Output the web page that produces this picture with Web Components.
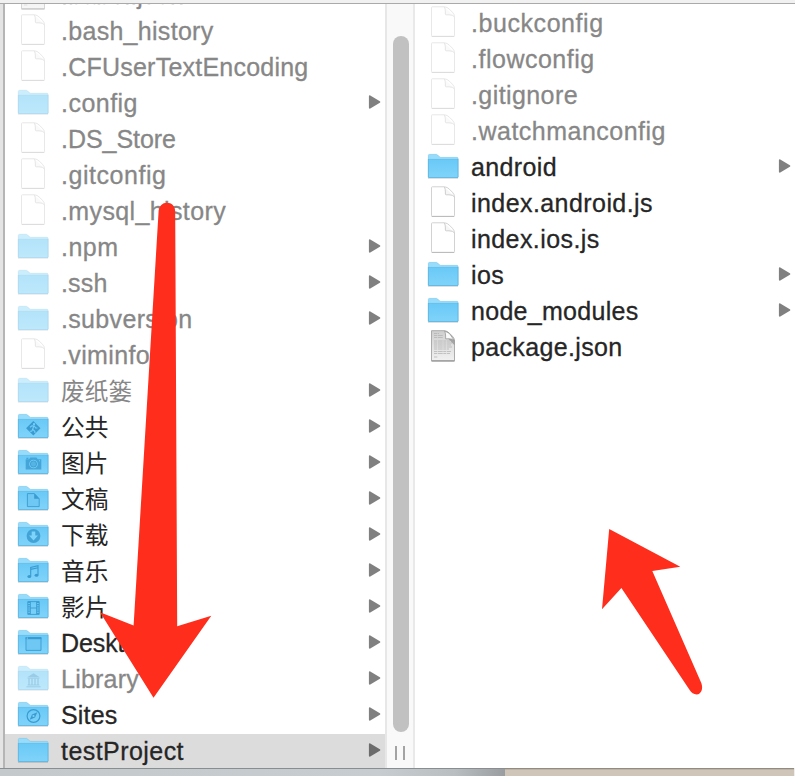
<!DOCTYPE html>
<html lang="zh-CN">
<head>
<meta charset="utf-8">
<title>Finder</title>
<style>
html,body{margin:0;height:100%;overflow:hidden;background:#fff}
body{font-family:"Liberation Sans","Noto Sans CJK SC",sans-serif}
</style>
</head>
<body>
<finder-window></finder-window>
<script>
const FOLDER = `
<defs><linearGradient id="f" x1="0" y1="0" x2="0" y2="1"><stop offset="0" stop-color="#69c9f7"/><stop offset="1" stop-color="#80d3f9"/></linearGradient></defs>
<path d="M1 28.3H31" stroke="#000" stroke-opacity=".14" stroke-width="1.2"/>
<path d="M1.4 27V5.4q0-1 1-1H9.2q.8 0 1.4.6L12.4 6.8q.5.6 1.3.6H30q1 0 1 1V27z" fill="#98dcfb" stroke="#7cc8ec" stroke-width=".7"/>
<path d="M1.4 9.3H31V27q0 .7-.7.7H2q-.7 0-.7-.7z" fill="url(#f)"/>
<path d="M1.4 9.4H31" stroke="#63bae4" stroke-width=".7"/>
<path d="M1.4 9V27.5H31V9" fill="none" stroke="#5cb2de" stroke-width=".8"/>`;
const DOC = `
<path d="M5.3 .8H17.4Q20.3 1 22.4 3.2L25.4 6.2Q27.5 8.3 27.5 11V29.6q0 .7-.7.7H5.2q-.7 0-.7-.7V1.5q0-.7.8-.7z" fill="#fff" stroke="#cdcdcd" stroke-width=".9"/>
<path d="M4.8 30.5H27.2" stroke="#b8b8b8" stroke-width=".9"/>
<path d="M17.4 .9Q18.4 3 18.4 6V8q0 .8.8.8H22Q26 8.8 27.4 10.8" fill="#f6f6f6" stroke="#cacaca" stroke-width=".9" stroke-linejoin="round"/>`;
const TEXTDOC = `
<defs><linearGradient id="t" x1="0" y1="0" x2="0" y2="1"><stop offset="0" stop-color="#cfcfcf"/><stop offset="1" stop-color="#f1f1f1"/></linearGradient></defs>
<path d="M4.5 .7H17.4Q20.3 1 22.4 3.2L25.4 6.2Q27.5 8.3 27.5 11V30.8H4.5z" fill="url(#t)" stroke="#a4a4a4" stroke-width=".9"/>
<path d="M4.5 31H27.5" stroke="#888"/>
<path d="M7 3.5h5M7 5.5h9M7 7.5h9M7 11h16M7 13h18M7 15h17M7 17h18M7 19h15M7 21.5h17M7 23.5h16M7 27h4" stroke="#b0b0b0" stroke-width=".7" stroke-dasharray="3 .7 5 .6"/>
<path d="M18.6 6L27.3 15V10z" fill="#777" opacity=".55"/>
<path d="M17.6 .9Q18.6 3 18.6 6V8.8H22Q26 8.8 27.4 10.6L22.4 3.4z" fill="#fafafa" stroke="#999" stroke-width=".8" stroke-linejoin="round"/>`;
const C = '#3a9bd0';
const GLYPHS = {
  public: `<path d="M16.3 11L23.5 18.2L16.3 25.4L9.1 18.2z" fill="${C}"/><circle cx="17" cy="14.1" r="1.2" fill="#74cdf8"/><path d="M13 17.3L15 15.8L17.4 16L18.6 18L20.4 18M16.6 16.3L15.7 19.3L17.8 21.3L18 23M15.7 19.2L14.7 21.2L12.8 21.3" fill="none" stroke="#74cdf8" stroke-width="1.1"/>`,
  camera: `<path d="M8.7 13.2H12L13.4 11.4H19.4L20.8 13.2H24.3V23.4H8.7z" fill="${C}" opacity=".8"/><path d="M9.4 12.3h2" stroke="${C}"/><circle cx="16.5" cy="18" r="4.3" fill="#74cdf8"/><circle cx="16.5" cy="18" r="3.1" fill="#55b4e3" stroke="${C}" stroke-width=".8"/><path d="M22 14.8h1" stroke="#74cdf8"/>`,
  paper: `<path d="M10.4 11.6H17.4L22.2 16.8V24.6H10.4z" fill="#6fc8f3" stroke="${C}" stroke-width=".9"/><path d="M17.2 11.5V16.8H22.4z" fill="${C}"/>`,
  down: `<circle cx="16.5" cy="18" r="6.9" fill="${C}" opacity=".85"/><path d="M14.7 13.4H18.3V17.5H21L16.5 22.6L12 17.5H14.7z" fill="#7ed3fa"/>`,
  music: `<path d="M13.7 22.2V13.4L21 11.7V21M13.7 15.4L21 13.8" fill="none" stroke="${C}" stroke-width="1.1"/><ellipse cx="12.3" cy="22.6" rx="1.9" ry="1.5" fill="${C}"/><ellipse cx="19.5" cy="21.3" rx="1.9" ry="1.5" fill="${C}"/>`,
  film: `<path d="M10.8 11.6H22.2V24.4H10.8z" fill="none" stroke="${C}" stroke-width=".9"/><path d="M12 11.8V24.4M21 11.8V24.4" stroke="${C}" stroke-width="1.8" stroke-dasharray="1.2 1"/><path d="M13.4 11.6V24.4M19.6 11.6V24.4M13.4 18H19.6" stroke="${C}" stroke-width=".9"/>`,
  desktop: `<path d="M9 11.5H24V24.4H9z" fill="#6fc8f3" stroke="${C}" stroke-width=".9"/><path d="M8.6 12.2H24.4" stroke="${C}" stroke-width="2"/><path d="M9.8 12.1h1" stroke="#9cdcfb"/>`,
  library: `<path d="M10.2 15.3L16.5 11.2L22.8 15.3z" fill="${C}"/><path d="M10.6 16.2H22.4M10.6 23H22.4M9.4 24.8H23.6" stroke="${C}" stroke-width="1"/><path d="M12 16.5V23M15 16.5V23M18 16.5V23M21 16.5V23" stroke="${C}" stroke-width="1.3"/>`,
  compass: `<circle cx="16.5" cy="18" r="6.4" fill="none" stroke="${C}" stroke-width="1.2"/><path d="M20.3 14.2L18 19.5L12.7 21.8L15 16.5z" fill="${C}"/><circle cx="16.5" cy="18" r="1.1" fill="#80d3f9"/>`
};

class FileIcon extends HTMLElement {
  connectedCallback() {
    const kind = this.getAttribute('kind');
    const art = kind === 'doc' ? DOC : kind === 'text' ? TEXTDOC : FOLDER + (GLYPHS[kind] || '');
    this.attachShadow({mode: 'open'}).innerHTML = `
      <style>:host{display:block;flex:none;width:33px;height:33px}svg{display:block}</style>
      <svg width="33" height="33" viewBox="0 0 33 33">${art}</svg>`;
  }
}
customElements.define('file-icon', FileIcon);

class FileRow extends HTMLElement {
  connectedCallback() {
    const kind = this.getAttribute('kind');
    const root = this.attachShadow({mode: 'open'});
    root.innerHTML = `
      <style>
      :host{display:flex;flex:none;box-sizing:border-box;height:36px;padding-left:12px;align-items:flex-start;color:#262626}
      :host([dim]) file-icon{opacity:.5}
      :host([dim]) .name{color:#878787;-webkit-text-stroke-color:#878787}
      :host([selected]){background:#dcdcdc}
      .name{margin-left:11px;font-size:25px;line-height:35px;white-space:pre;-webkit-text-stroke:.3px #262626}
      .cjk{font-size:23.7px;-webkit-text-stroke-width:0;line-height:36px}
      .arrow{display:block;margin:8px 4px 0 auto;color:#808080}
      :host([selected]) .arrow{color:#6c6c6c}
      </style>
      <file-icon kind="${kind}"></file-icon><span class="name"><slot></slot></span>
      ${this.hasAttribute('leaf') ? '' : '<svg class="arrow" width="14" height="16" viewBox="0 0 14 16"><path d="M2.8 2.2L12.4 8L2.8 13.8z" fill="currentColor" stroke="currentColor" stroke-width="1.8" stroke-linejoin="round"/></svg>'}`;
    const name = root.querySelector('.name');
    const text = this.textContent;
    if (/[\u4e00-\u9fff]/.test(text)) name.classList.add('cjk');
    const width = Number(this.getAttribute('span'));
    if (width) name.style.letterSpacing = (width - name.getBoundingClientRect().width) / text.length + 'px';
  }
}
customElements.define('file-row', FileRow);

class FileColumn extends HTMLElement {
  constructor() {
    super();
    this.attachShadow({mode: 'open'}).innerHTML = `
      <style>:host{display:flex;flex-direction:column;overflow:hidden;background:#fff;min-width:0}</style><slot></slot>`;
  }
}
customElements.define('file-column', FileColumn);

class ScrollTrack extends HTMLElement {
  constructor() {
    super();
    this.attachShadow({mode: 'open'}).innerHTML = `
      <style>
      :host{display:flex;flex-direction:column;align-items:center;box-sizing:border-box;background:#f9f9f9;border-left:2px solid #e7e7e7;border-right:2px solid #e9e9e9;padding-top:32px}
      .thumb{width:16px;height:696px;border-radius:8px;background:#c1c1c1;margin-left:2px}
      .grip{width:6px;height:14px;margin-top:14px;border:solid #a3a3a3;border-width:0 2px}
      </style><div class="thumb"></div><div class="grip"></div>`;
  }
}
customElements.define('scroll-track', ScrollTrack);

class MarkerArrows extends HTMLElement {
  constructor() {
    super();
    this.attachShadow({mode: 'open'}).innerHTML = `
      <style>:host{display:block;position:absolute;left:0;top:0;pointer-events:none}svg{display:block}</style>
      <svg width="795" height="776" viewBox="0 0 795 776" fill="#ff2d1c">
      <path d="M158.5 213C158.5 206 162.5 202.8 167 202.8S175.2 206 175.2 212L177.2 626.3L211.3 615.8L153.5 697.7L100 612.2L133.6 625.5z"/>
      <path d="M609.2 529L680.3 566.7L652.3 571L701.3 683C703.5 689 701 694.4 696.7 694.4C693.5 694.4 691.5 692.8 690 690.5L621.4 588L602 609.2z"/>
      </svg>`;
  }
}
customElements.define('marker-arrows', MarkerArrows);

class FinderWindow extends HTMLElement {
  constructor() {
    super();
    const row = ([name, kind, span, flags]) => `<file-row kind="${kind}" span="${span}" ${flags}>${name}</file-row>`;
    const home = [
      ['.babel.json','text',123,'dim leaf'],
      ['.bash_history','doc',152.5,'dim leaf'],
      ['.CFUserTextEncoding','doc',247.5,'dim leaf'],
      ['.config','folder',77,'dim'],
      ['.DS_Store','doc',115,'dim leaf'],
      ['.gitconfig','doc',105.5,'dim leaf'],
      ['.mysql_history','doc',165,'dim leaf'],
      ['.npm','folder',57.5,'dim'],
      ['.ssh','folder',46.5,'dim'],
      ['.subversion','folder',131.5,'dim'],
      ['.viminfo','doc',89,'dim leaf'],
      ['废纸篓','folder',71.3,'dim'],
      ['公共','public',47.5,''],
      ['图片','camera',47.5,''],
      ['文稿','paper',47.5,''],
      ['下载','down',47.5,''],
      ['音乐','music',47.5,''],
      ['影片','film',47.5,''],
      ['Desktop','desktop',91,''],
      ['Library','library',78,'dim'],
      ['Sites','compass',56.5,''],
      ['testProject','folder',123,'selected']
    ];
    const project = [
      ['.buckconfig','doc',132.7,'dim leaf'],
      ['.flowconfig','doc',123.7,'dim leaf'],
      ['.gitignore','doc',107,'dim leaf'],
      ['.watchmanconfig','doc',195,'dim leaf'],
      ['android','folder',86,''],
      ['index.android.js','doc',182,'leaf'],
      ['index.ios.js','doc',128.7,'leaf'],
      ['ios','folder',33,''],
      ['node_modules','folder',167.5,''],
      ['package.json','text',151.5,'leaf']
    ];
    this.attachShadow({mode: 'open'}).innerHTML = `
      <style>
      :host{display:flex;flex-direction:column;position:relative;width:795px;height:776px;overflow:hidden}
      .top{flex:none;height:3px;background:#f1f1f1;border-bottom:1px solid #aaa}
      .panes{flex:none;display:grid;grid-template-columns:380px 30px 1fr;height:764px;border-left:2px solid #b5b5b5;box-sizing:border-box}
      .frame{display:grid;grid-template-columns:3px 1fr;background:#e4e4e4}
      .home{justify-content:flex-end;margin-bottom:-2px}
      .clip{overflow:hidden;display:grid;height:764px}
      .project{padding-top:2px}
      .desk{display:grid;grid-template-columns:505px 289px 1px;height:8px}
      .desk div{border-top:1px solid #898d8f;box-sizing:border-box}
      .desk .a{background:linear-gradient(90deg,#c4cacc 0,#c6cccf 75%,#b9bec1 90%,#999da0 100%)}
      .desk .b{border-color:#918b82;background:linear-gradient(#bdb3a7 0 1px,#cfc5b8 1px)}
      .desk .c{border-color:#eee;background:#eee}
      </style>
      <div class="top"></div>
      <div class="frame"><span></span><div class="panes">
        <div class="clip"><file-column class="home">${home.map(row).join('')}</file-column></div>
        <scroll-track></scroll-track>
        <file-column class="project">${project.map(row).join('')}</file-column>
      </div></div>
      <div class="desk"><div class="a"></div><div class="b"></div><div class="c"></div></div>
      <marker-arrows></marker-arrows>`;
  }
}
customElements.define('finder-window', FinderWindow);
</script>
</body>
</html>
